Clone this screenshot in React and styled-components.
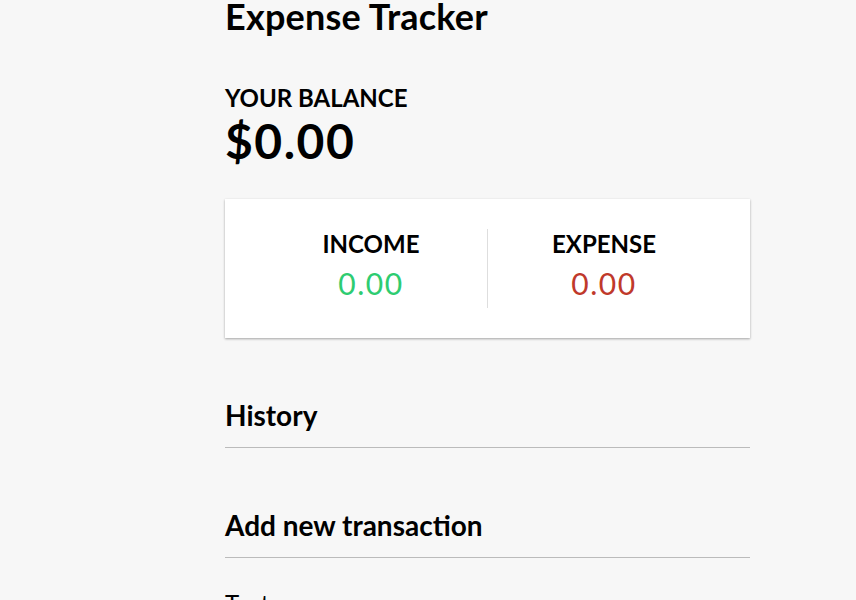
import React from 'react';
import styled, { createGlobalStyle } from 'styled-components';

const GlobalStyle = createGlobalStyle`
	* {
		box-sizing: border-box;
	}
	body {
		margin: 0;
		background-color: #f7f7f7;
		font-family: 'Lato', 'Open Sans', sans-serif;
		color: #000;
		overflow: hidden;
	}
`;

const Container = styled.div`
	width: 525px;
	margin: -5px 0 0 225px;
`;

const Title = styled.h2`
	font-size: 36px;
	font-weight: 700;
	letter-spacing: 0.2px;
	line-height: 43px;
	margin: 0;
`;

const Label = styled.h4`
	font-size: 24px;
	font-weight: 700;
	text-transform: uppercase;
	line-height: 29px;
	margin: ${props => props.top || 0} 0 0;
`;

const Balance = styled.h1`
	font-size: 48px;
	font-weight: 700;
	letter-spacing: 1.5px;
	line-height: 58px;
	margin: 0;
`;

const Card = styled.div`
	background-color: #fff;
	box-shadow: 0 1px 3px rgba(0, 0, 0, 0.12), 0 1px 2px rgba(0, 0, 0, 0.24);
	padding: 30px;
	display: flex;
	justify-content: space-between;
	margin: 29px 0 31px;
`;

const Column = styled.div`
	flex: 1;
	text-align: center;
	&:first-of-type {
		border-right: 1px solid #dedede;
	}
`;

const Money = styled.p`
	font-size: 30px;
	letter-spacing: 1.5px;
	line-height: 36px;
	margin: 7px 0 7px;
	color: ${props => (props.plus ? '#2ecc71' : '#c0392b')};
`;

const SectionTitle = styled.h3`
	font-size: 28px;
	font-weight: 700;
	line-height: 34px;
	border-bottom: 1px solid #bbb;
	padding-bottom: 15px;
	margin: 60px 0 15px;
`;

const List = styled.ul`
	list-style-type: none;
	padding: 0;
	margin: 0 0 60px;
`;

const FormControl = styled.div``;

const FieldLabel = styled.label`
	display: inline-block;
	font-size: 24px;
	margin: 15px 0;
`;

const App = () => {
	return (
		<>
			<GlobalStyle />
			<Container>
				<Title>Expense Tracker</Title>
				<Label top="45px">Your Balance</Label>
				<Balance>$0.00</Balance>
				<Card>
					<Column>
						<Label>Income</Label>
						<Money plus>0.00</Money>
					</Column>
					<Column>
						<Label>Expense</Label>
						<Money>0.00</Money>
					</Column>
				</Card>
				<SectionTitle>History</SectionTitle>
				<List />
				<SectionTitle>Add new transaction</SectionTitle>
				<form>
					<FormControl>
						<FieldLabel htmlFor="text">Text</FieldLabel>
					</FormControl>
				</form>
			</Container>
		</>
	);
};

export default App;
